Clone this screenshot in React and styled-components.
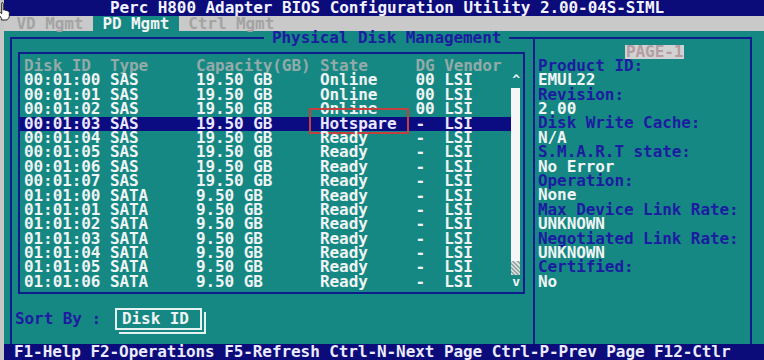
import React from "react";
import styled, { createGlobalStyle } from "styled-components";

const CH = 9.55;
const ROW = 14.4;

const C = {
  teal: "#168884",
  navy: "#0b0b7a",
  line: "#0e1c8c",
  label: "#1c1ca0",
  white: "#f0f4f4",
  dim: "#93aba8",
  gray: "#c6c6c6",
};

const GlobalStyle = createGlobalStyle`
  html, body {
    margin: 0;
    padding: 0;
    background: ${C.gray};
  }
  body {
    width: 764px;
    height: 360px;
    overflow: hidden;
  }
`;

const Page = styled.div`
  position: relative;
  width: 764px;
  height: 360px;
  display: flex;
  background: ${C.gray};
  font-family: "DejaVu Sans Mono", "Liberation Mono", monospace;
  font-weight: bold;
  font-size: 16px;
  letter-spacing: -0.08px;
  line-height: ${ROW}px;
  white-space: pre;
`;

const Screen = styled.div`
  margin-left: 4px;
  flex: 1;
  display: flex;
  flex-direction: column;
  background: ${C.teal};
`;

const TitleBar = styled.div`
  height: 16px;
  display: flex;
  align-items: center;
  padding-left: 106px;
  background: ${C.navy};
  color: #f2f2ff;
`;

const TabRow = styled.div`
  height: 15px;
  display: flex;
  padding-left: 3px;
  background: #c9c9c9;
`;

const Tab = styled.div`
  padding: 0 9.5px;
  line-height: 15px;
  color: ${({ $active }) => ($active ? C.white : "#a3a3a3")};
  background: ${({ $active }) => ($active ? C.teal : "transparent")};
`;

const Main = styled.div`
  flex: 1;
  display: flex;
  padding: 6px 12px 0 6px;
`;

const Frame = styled.div`
  position: relative;
  flex: 1;
  display: flex;
  border: 2px solid ${C.line};
  border-bottom: none;
`;

const FrameTitle = styled.div`
  position: absolute;
  top: -8px;
  left: 252px;
  padding: 0 8px;
  background: ${C.teal};
  color: ${C.label};
`;

const LeftPane = styled.div`
  width: 521px;
  display: flex;
  flex-direction: column;
  padding: 13px 8px 0 3px;
  box-sizing: border-box;
`;

const ListBox = styled.div`
  margin-left: 3px;
  display: flex;
  padding: 5px 2px 2.6px 0;
  border: 2px solid ${C.line};
`;

const Table = styled.div`
  flex: 1;
  display: flex;
  flex-direction: column;
`;

const Row = styled.div`
  height: ${ROW}px;
  display: grid;
  grid-template-columns: ${9 * CH}px ${9 * CH}px ${13 * CH}px ${10 * CH}px ${3 * CH}px 1fr;
  padding-left: 4px;
  color: ${({ $header, $selected }) =>
    $header ? C.dim : $selected ? "#ebe6ff" : C.white};
  background: ${({ $selected }) => ($selected ? "#0c0c82" : "transparent")};
`;

const Cell = styled.span`
  position: relative;
`;

const Highlight = styled.span`
  position: absolute;
  left: -11px;
  top: -9px;
  width: 100px;
  height: 26px;
  box-sizing: border-box;
  border: 2px solid #c4403c;
`;

const ScrollBar = styled.div`
  width: 10px;
  display: flex;
  flex-direction: column;
  padding-top: ${ROW}px;
`;

const Arrow = styled.div`
  height: ${ROW}px;
  color: ${C.white};
  font-size: 13px;
  text-align: center;
`;

const Track = styled.div`
  height: ${ROW * 12}px;
  width: 9px;
  background: #f6f6f6;
`;

const Hatch = styled.div`
  height: ${ROW}px;
  width: 9px;
  background: repeating-linear-gradient(
    45deg,
    #dcdcdc 0 1.5px,
    #8ea8a6 1.5px 3px
  );
`;

const SortRow = styled.div`
  margin-top: 14px;
  display: flex;
  align-items: center;
  gap: 14px;
`;

const SortLabel = styled.span`
  color: ${C.label};
`;

const SortButton = styled.div`
  height: 22px;
  box-sizing: border-box;
  display: flex;
  align-items: center;
  padding: 0 11px 0 5px;
  border: 2px solid #e6f2f2;
  color: ${C.white};
  box-shadow: 2px 2px 0 0 ${C.teal}, 4px 4px 0 0 #e6f2f2;
`;

const RightPane = styled.div`
  flex: 1;
  display: flex;
  flex-direction: column;
  padding: 5.5px 0 0 3px;
  border-left: 2px solid ${C.line};
`;

const PageTag = styled.div`
  align-self: flex-start;
  margin-left: 87px;
  height: ${ROW}px;
  padding: 0 1px;
  background: #d2d2d2;
  color: #b39ca2;
`;

const Line = styled.div`
  height: ${ROW}px;
  color: ${({ $label }) => ($label ? C.label : C.white)};
`;

const StatusBar = styled.div`
  height: 16px;
  display: flex;
  align-items: center;
  padding-left: 10px;
  background: ${C.navy};
  color: #ecebff;
`;

const Cursor = styled.svg`
  position: absolute;
  left: -2px;
  top: 1px;
`;

const disks = [
  ["00:01:00", "SAS", "19.50 GB", "Online", "00", "LSI"],
  ["00:01:01", "SAS", "19.50 GB", "Online", "00", "LSI"],
  ["00:01:02", "SAS", "19.50 GB", "Online", "00", "LSI"],
  ["00:01:03", "SAS", "19.50 GB", "Hotspare", "-", "LSI"],
  ["00:01:04", "SAS", "19.50 GB", "Ready", "-", "LSI"],
  ["00:01:05", "SAS", "19.50 GB", "Ready", "-", "LSI"],
  ["00:01:06", "SAS", "19.50 GB", "Ready", "-", "LSI"],
  ["00:01:07", "SAS", "19.50 GB", "Ready", "-", "LSI"],
  ["01:01:00", "SATA", "9.50 GB", "Ready", "-", "LSI"],
  ["01:01:01", "SATA", "9.50 GB", "Ready", "-", "LSI"],
  ["01:01:02", "SATA", "9.50 GB", "Ready", "-", "LSI"],
  ["01:01:03", "SATA", "9.50 GB", "Ready", "-", "LSI"],
  ["01:01:04", "SATA", "9.50 GB", "Ready", "-", "LSI"],
  ["01:01:05", "SATA", "9.50 GB", "Ready", "-", "LSI"],
  ["01:01:06", "SATA", "9.50 GB", "Ready", "-", "LSI"],
];

const details = [
  ["Product ID:", "EMUL22"],
  ["Revision:", "2.00"],
  ["Disk Write Cache:", "N/A"],
  ["S.M.A.R.T state:", "No Error"],
  ["Operation:", "None"],
  ["Max Device Link Rate:", "UNKNOWN"],
  ["Negotiated Link Rate:", "UNKNOWN"],
  ["Certified:", "No"],
];

const SELECTED = 3;

export default function App() {
  return (
    <Page>
      <GlobalStyle />
      <Screen>
        <TitleBar>Perc H800 Adapter BIOS Configuration Utility 2.00-04S-SIML</TitleBar>
        <TabRow>
          <Tab>VD Mgmt</Tab>
          <Tab $active>PD Mgmt</Tab>
          <Tab>Ctrl Mgmt</Tab>
        </TabRow>
        <Main>
          <Frame>
            <FrameTitle>Physical Disk Management</FrameTitle>
            <LeftPane>
              <ListBox>
                <Table>
                  <Row $header>
                    <Cell>Disk ID</Cell>
                    <Cell>Type</Cell>
                    <Cell>Capacity(GB)</Cell>
                    <Cell>State</Cell>
                    <Cell>DG</Cell>
                    <Cell>Vendor</Cell>
                  </Row>
                  {disks.map((d, i) => (
                    <Row key={d[0]} $selected={i === SELECTED}>
                      <Cell>{d[0]}</Cell>
                      <Cell>{d[1]}</Cell>
                      <Cell>{d[2]}</Cell>
                      <Cell>
                        {d[3]}
                        {i === SELECTED && <Highlight />}
                      </Cell>
                      <Cell>{d[4]}</Cell>
                      <Cell>{d[5]}</Cell>
                    </Row>
                  ))}
                </Table>
                <ScrollBar>
                  <Arrow>^</Arrow>
                  <Track />
                  <Hatch />
                  <Arrow>v</Arrow>
                </ScrollBar>
              </ListBox>
              <SortRow>
                <SortLabel>Sort By :</SortLabel>
                <SortButton>Disk ID</SortButton>
              </SortRow>
            </LeftPane>
            <RightPane>
              <PageTag>PAGE-1</PageTag>
              {details.map(([label, value]) => (
                <React.Fragment key={label}>
                  <Line $label>{label}</Line>
                  <Line>{value}</Line>
                </React.Fragment>
              ))}
            </RightPane>
          </Frame>
        </Main>
        <StatusBar>F1-Help F2-Operations F5-Refresh Ctrl-N-Next Page Ctrl-P-Prev Page F12-Ctlr</StatusBar>
      </Screen>
      <Cursor width="12" height="20" viewBox="0 0 12 20">
        <path
          d="M4 1.5c.8 0 1.3.6 1.3 1.3V9l.6-.2c.8-.2 1.5.1 1.8.7l.5-.1c.8-.1 1.4.3 1.6.9.8-.1 1.5.4 1.5 1.2v3.6c0 1.6-1 3-2.4 3.6V19H3.6v-1.4L1 13.6c-.5-.8-.3-1.6.4-2 .6-.3 1.3-.1 1.7.4l.6.8V2.8c0-.7.1-1.3.3-1.3z"
          fill="#fff"
          stroke="#111"
          strokeWidth="0.9"
        />
      </Cursor>
    </Page>
  );
}
